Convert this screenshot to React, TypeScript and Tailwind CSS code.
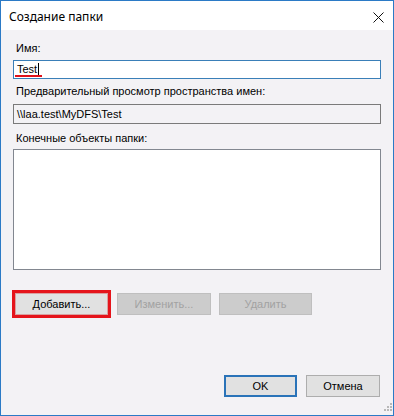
import React from "react";

export default function App() {
  return (
    <div className="relative w-[394px] h-[416px] border border-[#2b7ac6] bg-[#f3f2f5] flex flex-col overflow-hidden" style={{ fontFamily: '"Liberation Sans", Arial, sans-serif' }}>
      {/* title bar */}
      <div className="h-[29px] bg-white flex items-center justify-between pl-[8px] pr-[9px] shrink-0">
        <span className="text-[12px] text-black mt-[3px]" style={{ fontFamily: '"Noto Sans", sans-serif' }}>Создание папки</span>
        <svg width="11" height="11" viewBox="0 0 11 11" className="mt-[3px]">
          <path d="M0.5 0.5 L10.5 10.5 M10.5 0.5 L0.5 10.5" stroke="#111" strokeWidth="1" fill="none" />
        </svg>
      </div>

      {/* body */}
      <div className="flex flex-col px-[12px] text-[11px] text-black">
        <div className="h-[13px] leading-[13px] mt-[12px] pl-[3px]">Имя:</div>
        <div className="relative h-[19px] mt-[5px] border border-[#3a7fb8] bg-white flex items-center pl-[3px]">
          <span className="leading-[13px]">Test</span>
          <span className="w-px h-[13px] bg-black ml-[1px]"></span>
          <span className="absolute left-[1px] top-[14px] w-[27px] h-[2px] bg-[#e0121a]"></span>
        </div>
        <div className="h-[13px] leading-[13px] mt-[6px] pl-[3px]">Предварительный просмотр пространства имен:</div>
        <div className="h-[20px] mt-[6px] border border-[#7a7a7a] flex items-center pl-[3px]">
          <span className="leading-[13px]">\\laa.test\MyDFS\Test</span>
        </div>
        <div className="h-[13px] leading-[13px] mt-[8px] pl-[3px]">Конечные объекты папки:</div>
        <div className="h-[121px] mt-[4px] border border-[#828790] bg-white"></div>

        <div className="flex items-center mt-[20px] h-[28px]">
          <div className="w-[99px] h-[28px] border-[3px] border-[#e5141b] -ml-px">
            <div className="w-full h-full bg-[#e1e1e1] border border-[#d9a0a0] flex items-center justify-center">
              Добавить...
            </div>
          </div>
          <div className="w-[94px] h-[22px] ml-[6px] bg-[#cccccc] border border-[#bfbfbf] text-[#a2a2a2] flex items-center justify-center">
            Изменить...
          </div>
          <div className="w-[93px] h-[22px] ml-[8px] bg-[#cccccc] border border-[#bfbfbf] text-[#a2a2a2] flex items-center justify-center">
            Удалить
          </div>
        </div>

        <div className="flex justify-end mt-[57px] pr-[1px]">
          <div className="w-[73px] h-[22px] bg-[#e1e1e1] border-2 border-[#2a73b8] flex items-center justify-center">
            OK
          </div>
          <div className="w-[74px] h-[22px] ml-[9px] bg-[#e1e1e1] border border-[#adadad] flex items-center justify-center">
            Отмена
          </div>
        </div>
      </div>

      {/* resize grip */}
      <svg width="10" height="10" viewBox="0 0 10 10" className="absolute right-[1px] bottom-[2px]">
        <rect x="8" y="0" width="2" height="2" fill="#b8b8b8" />
        <rect x="5" y="3" width="2" height="2" fill="#b8b8b8" />
        <rect x="8" y="3" width="2" height="2" fill="#b8b8b8" />
        <rect x="2" y="6" width="2" height="2" fill="#b8b8b8" />
        <rect x="5" y="6" width="2" height="2" fill="#b8b8b8" />
        <rect x="8" y="6" width="2" height="2" fill="#b8b8b8" />
      </svg>
    </div>
  );
}
